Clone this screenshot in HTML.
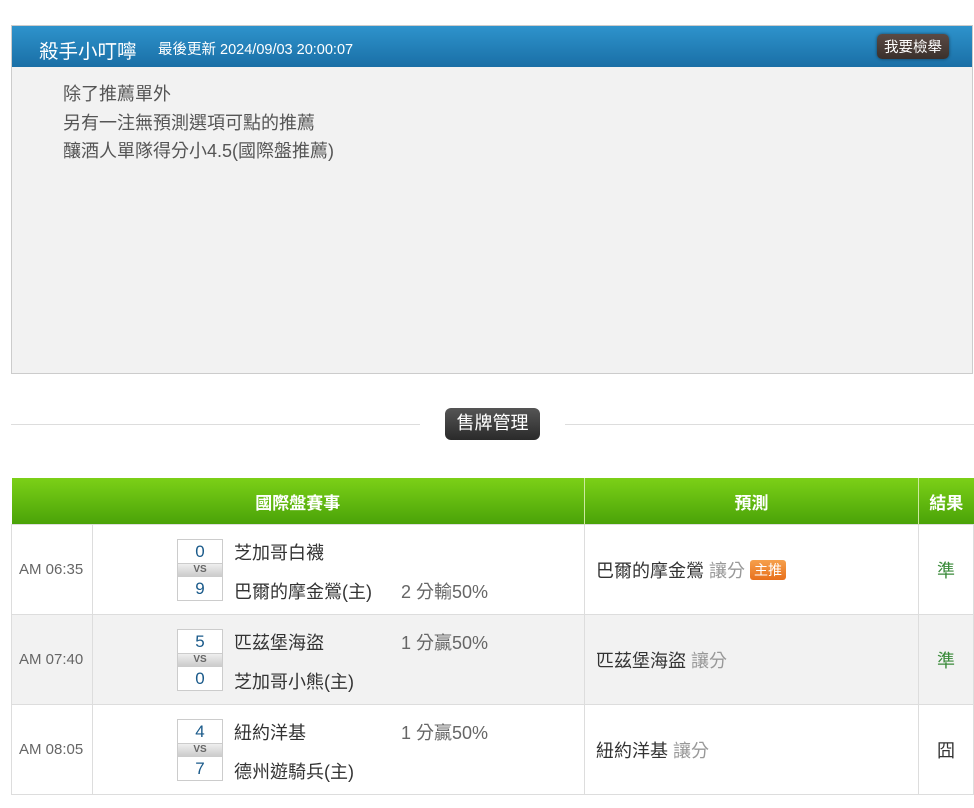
<!DOCTYPE html>
<html><head><meta charset="utf-8"><style>
body{margin:0;background:#fff;font-family:"Liberation Sans","Noto Sans CJK TC",sans-serif;width:974px;height:808px;overflow:hidden;position:relative}
.panel{position:absolute;left:11px;top:25px;width:960px;height:347px;border:1px solid #ccc;background:#f2f2f2}
.ph{height:41px;background:linear-gradient(#2e93cc,#1a6fa6);position:relative;color:#fff}
.ph .t{position:absolute;left:27px;top:9px;font-size:19.5px}
.ph .u{position:absolute;left:146px;top:12px;font-size:14.5px}
.ph .b{position:absolute;right:23px;top:8px;background:linear-gradient(#5a4a44,#3a302c);border-radius:5px;font-size:14.5px;padding:2px 7px;box-shadow:0 0 3px rgba(0,0,0,.5)}
.pb{padding:13px 0 0 51px;font-size:18px;color:#555;line-height:28.5px}
.sep{position:absolute;top:424px;height:1px;background:#ddd}
.btn{position:absolute;left:445px;top:408px;width:95px;height:32px;background:linear-gradient(#555,#2a2a2a);border-radius:6px;color:#fff;font-size:18px;text-align:center;line-height:31px}
table{position:absolute;left:11px;top:478px;border-collapse:collapse;width:962px;table-layout:fixed}
th{height:46px;background:linear-gradient(#7cd017,#4aa308);color:#fff;font-size:17px;font-weight:bold;border-right:1px solid #cde9a0;padding:0}
td{border:1px solid #ddd;height:89px;padding:0;font-size:18px;color:#333}
tr.g td{background:#f2f2f2}
.tm{font-size:15px;color:#666;padding-left:7px}
.m{position:relative;height:89px}
.sc{position:absolute;left:84px;top:14px;width:46px}
.sc div{border:1px solid #ccc;background:#fff;height:23px;text-align:center;color:#1a5a8a;font-size:17px;line-height:23px}
.sc .vs{height:12px;background:linear-gradient(#eee,#ccc);font-size:10px;line-height:12px;color:#666;font-weight:bold;border-top:0;border-bottom:0}
.n1{position:absolute;left:141px;top:14px}
.n2{position:absolute;left:141px;top:53px}
.h{position:absolute;left:308px;color:#666}
.p{padding-left:11px}
.p .gr{color:#999}
.tag{display:inline-block;background:linear-gradient(#f6a04c,#e8701c);color:#fff;font-size:14px;padding:0 4px;border-radius:3px;line-height:20px;vertical-align:2px}
.r{text-align:center;color:#3a8a3a}
</style></head><body>
<div class="panel"><div class="ph"><span class="t">殺手小叮嚀</span><span class="u">最後更新 2024/09/03 20:00:07</span><span class="b">我要檢舉</span></div>
<div class="pb">除了推薦單外<br>另有一注無預測選項可點的推薦<br>釀酒人單隊得分小4.5(國際盤推薦)</div></div>
<div class="sep" style="left:11px;width:409px"></div><div class="sep" style="left:565px;width:409px"></div>
<div class="btn">售牌管理</div>
<table>
<colgroup><col style="width:81px"><col style="width:492px"><col style="width:334px"><col style="width:55px"></colgroup>
<tr><th colspan="2">國際盤賽事</th><th>預測</th><th style="border-right:0">結果</th></tr>
<tr><td class="tm">AM 06:35</td><td><div class="m"><div class="sc"><div>0</div><div class="vs">VS</div><div>9</div></div><span class="n1">芝加哥白襪</span><span class="n2">巴爾的摩金鶯(主)<span class="h" style="left:167px;white-space:nowrap">2 分輸50%</span></span></div></td><td class="p">巴爾的摩金鶯 <span class="gr">讓分</span> <span class="tag">主推</span></td><td class="r">準</td></tr>
<tr class="g"><td class="tm">AM 07:40</td><td><div class="m"><div class="sc"><div>5</div><div class="vs">VS</div><div>0</div></div><span class="n1">匹茲堡海盜<span class="h" style="left:167px;white-space:nowrap">1 分贏50%</span></span><span class="n2">芝加哥小熊(主)</span></div></td><td class="p">匹茲堡海盜 <span class="gr">讓分</span></td><td class="r">準</td></tr>
<tr><td class="tm">AM 08:05</td><td><div class="m"><div class="sc"><div>4</div><div class="vs">VS</div><div>7</div></div><span class="n1">紐約洋基<span class="h" style="left:167px;white-space:nowrap">1 分贏50%</span></span><span class="n2">德州遊騎兵(主)</span></div></td><td class="p">紐約洋基 <span class="gr">讓分</span></td><td class="r" style="color:#333">囧</td></tr>
</table>
</body></html>
